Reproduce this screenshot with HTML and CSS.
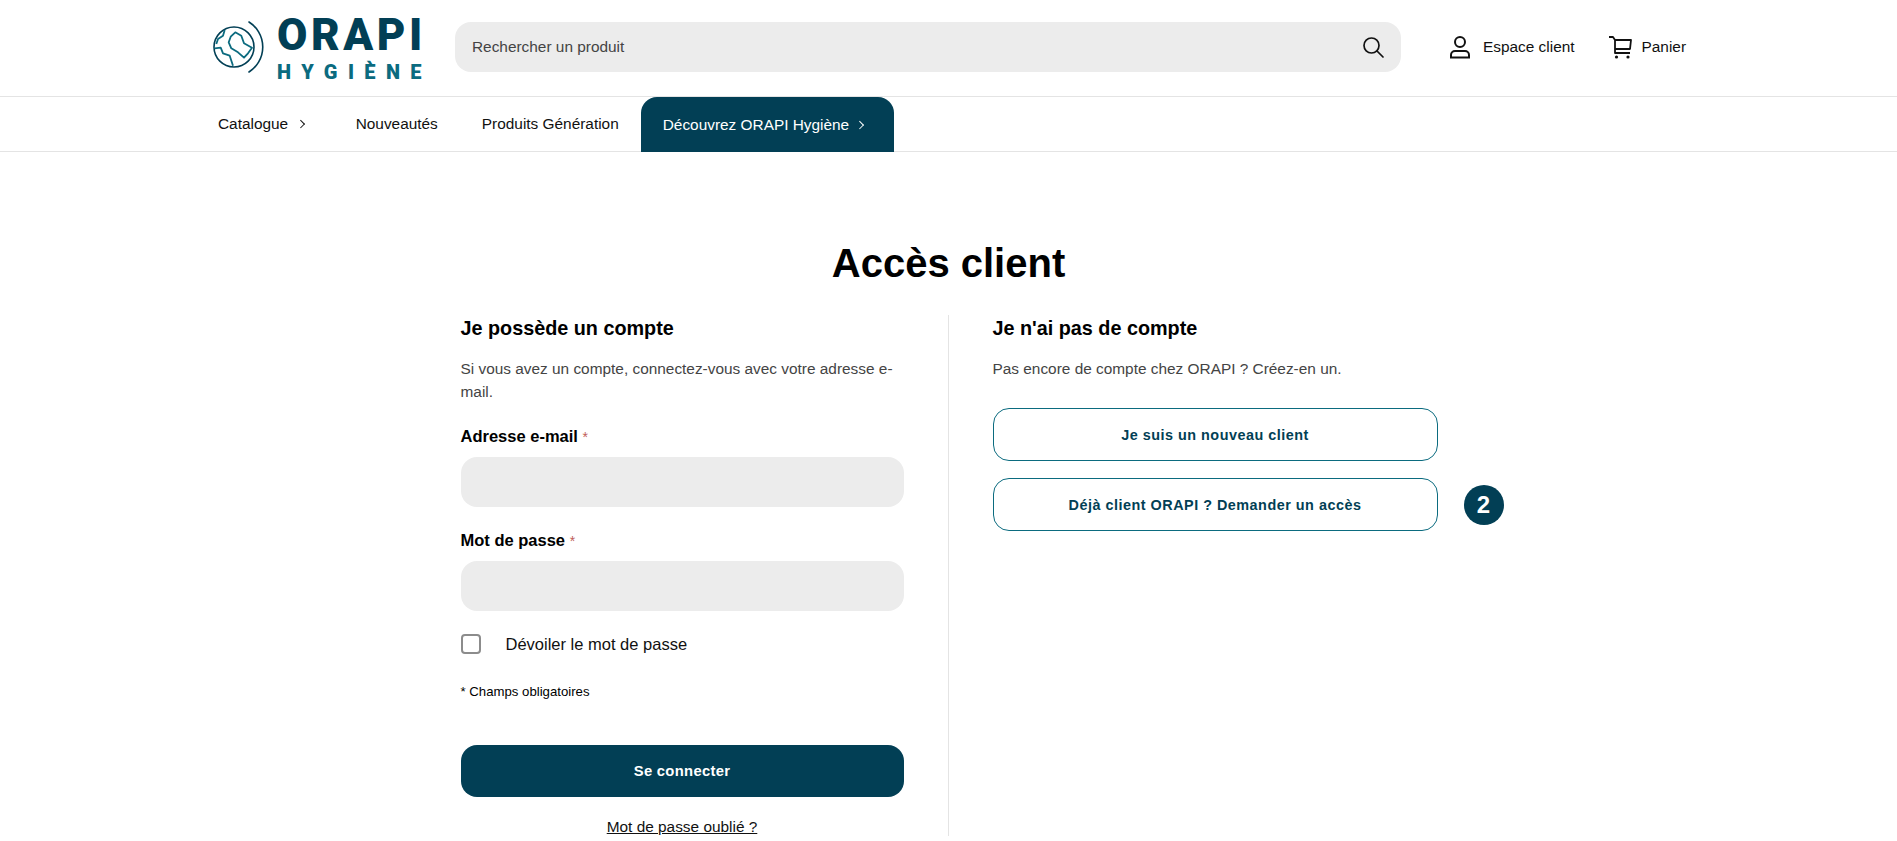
FILE: index.html
```html
<!DOCTYPE html>
<html lang="fr">
<head>
    <meta charset="UTF-8">
    <meta name="viewport" content="width=device-width, initial-scale=1.0">
    <title>Accès client - ORAPI Hygiène</title>
    <link rel="stylesheet" href="styles.css">
</head>
<body>
    <!-- Header -->
    <header class="header">
        <a class="logo" href="#">
            <svg class="logo-globe" width="58" height="58" viewBox="0 0 58 58" fill="none">
                <circle cx="23" cy="29" r="20" stroke="#023f55" stroke-width="1.6"/>
                <path d="M38 4A29.6 29.6 0 0 1 38 54" stroke="#023f55" stroke-width="1.6" stroke-linecap="round"/>
                <path d="M19.7 18.7L24.3 14.3 30.3 17.7 33 25.3 41 29.7 37 35.3 33 39.7 27 34.3 20.3 30.3 17.7 24.3z" stroke="#0b6b7f" stroke-width="1.8" stroke-linejoin="round"/>
                <path d="M3.7 30.3L9.7 29.7 12 35.3 18.7 37.7 22 47.7" stroke="#0b6b7f" stroke-width="1.8" stroke-linejoin="round"/>
                <path d="M13.7 12L12 17.7 7 21 5.3 26" stroke="#0b6b7f" stroke-width="1.8" stroke-linejoin="round"/>
            </svg>
            <span class="logo-text">
                <span class="logo-name">ORAPI</span>
                <span class="logo-sub">HYGIÈNE</span>
            </span>
        </a>
        <div class="search">
            <span class="search-text">Rechercher un produit</span>
            <svg width="24" height="24" viewBox="0 0 24 24" fill="none" stroke="#111" stroke-width="1.7" stroke-linecap="round">
                <circle cx="10.5" cy="10.5" r="7.5"/>
                <path d="M16 16l6 6"/>
            </svg>
        </div>
        <a class="header-link account" href="#">
            <svg width="22" height="24" viewBox="0 0 22 24" fill="none" stroke="#111" stroke-width="2">
                <circle cx="11" cy="7" r="5"/>
                <path d="M2 22.500v-2.500a4 4 0 0 1 4-4h10a4 4 0 0 1 4 4v2.500z"/>
            </svg>
            Espace client
        </a>
        <a class="header-link cart" href="#">
            <svg width="24" height="24" viewBox="0 0 24 24" fill="none" stroke="#111" stroke-width="1.8" stroke-linejoin="round">
                <path d="M1 2h4l2 3v13h15"/>
                <path d="M7 5h16l-1 9H7"/>
                <circle cx="8.500" cy="22" r="1.600" fill="#111" stroke="none"/>
                <circle cx="20" cy="22" r="1.600" fill="#111" stroke="none"/>
            </svg>
            Panier
        </a>
    </header>

    <!-- Navigation -->
    <nav class="nav">
        <a class="nav-item catalog" href="#">Catalogue <span class="chevron"></span></a>
        <a class="nav-item" href="#">Nouveautés</a>
        <a class="nav-item" href="#">Produits Génération</a>
        <a class="nav-item nav-active" href="#">Découvrez ORAPI Hygiène <span class="chevron"></span></a>
    </nav>

    <main class="main">
        <h1>Accès client</h1>
        <div class="columns">
            <!-- Login -->
            <section class="col col-left">
                <h2>Je possède un compte</h2>
                <p class="intro">Si vous avez un compte, connectez-vous avec votre adresse e-mail.</p>
                <label class="field-label" for="email">Adresse e-mail <span class="req">*</span></label>
                <input class="field" id="email" type="text">
                <label class="field-label" for="password">Mot de passe <span class="req">*</span></label>
                <input class="field" id="password" type="password">
                <label class="show-pass"><span class="checkbox"></span>Dévoiler le mot de passe</label>
                <p class="required-note">* Champs obligatoires</p>
                <button class="btn-primary">Se connecter</button>
                <a class="forgot" href="#">Mot de passe oublié ?</a>
            </section>

            <!-- New account -->
            <section class="col col-right">
                <h2>Je n'ai pas de compte</h2>
                <p class="intro">Pas encore de compte chez ORAPI ? Créez-en un.</p>
                <a class="btn-outline" href="#">Je suis un nouveau client</a>
                <div class="access-row">
                    <a class="btn-outline" href="#">Déjà client ORAPI ? Demander un accès</a>
                    <span class="badge">2</span>
                </div>
            </section>
        </div>
    </main>
</body>
</html>
```

FILE: styles.css
```css
* {
    box-sizing: border-box;
}
body {
    font-family: "Liberation Sans", Arial, sans-serif;
    margin: 0;
    background-color: #fff;
    color: #000;
}
a {
    color: inherit;
    text-decoration: none;
}
.header {
    height: 97px;
    display: flex;
    align-items: center;
    padding: 0 0 2px 211px;
    border-bottom: 1px solid #e4e4e4;
}
.logo {
    display: flex;
    align-items: center;
    width: 244px;
    flex-shrink: 0;
}
.logo-globe {
    margin-right: 8px;
    flex-shrink: 0;
}
.logo-text {
    display: flex;
    flex-direction: column;
    padding-top: 2.4px;
    font-family: Roboto, sans-serif;
    font-weight: 900;
}
.logo-name {
    font-size: 44px;
    line-height: 42px;
    letter-spacing: 3.6px;
    color: #023f55;
}
.logo-sub {
    margin-top: 5.4px;
    font-size: 20px;
    line-height: 22px;
    letter-spacing: 10.4px;
    color: #0b6b7f;
}
.search {
    width: 946px;
    height: 50px;
    display: flex;
    align-items: center;
    justify-content: space-between;
    padding: 0 16px 0 17px;
    background-color: #ececec;
    border-radius: 16px;
    font-size: 15.4px;
    color: #444;
}
.header-link {
    display: flex;
    align-items: center;
    gap: 12px;
    font-size: 15.4px;
    color: #111;
}
.account {
    margin-left: 48px;
}
.cart {
    margin-left: 33px;
    gap: 10px;
}
.nav {
    height: 55px;
    display: flex;
    padding-left: 218px;
    border-bottom: 1px solid #e4e4e4;
}
.nav-item {
    display: flex;
    align-items: center;
    gap: 10px;
    font-size: 15.4px;
    color: #111;
    margin-right: 44px;
}
.catalog {
    margin-right: 52px;
}
.nav-active {
    margin-left: -22px;
    margin-right: 0;
    padding: 0 31px 0 22px;
    height: 55px;
    gap: 8px;
    background-color: #023f55;
    color: #fff;
    border-radius: 16px 16px 0 0;
}
.chevron {
    width: 5.5px;
    height: 5.5px;
    border-top: 1.5px solid currentColor;
    border-right: 1.5px solid currentColor;
    transform: rotate(45deg);
}
.main {
    padding-top: 86px;
}
h1 {
    margin: 0 0 27px;
    font-size: 40px;
    line-height: 50px;
    text-align: center;
}
.columns {
    width: 976px;
    margin: 0 auto;
    display: grid;
    grid-template-columns: 488px 488px;
}
.col-left {
    padding-right: 44px;
    border-right: 1px solid #e4e4e4;
    height: 521px;
}
.col-right {
    padding-left: 44px;
}
h2 {
    margin: 0 0 17px;
    font-size: 19.800px;
    line-height: 26px;
}
.intro {
    margin: 0;
    font-size: 15.4px;
    line-height: 22.500px;
    color: #444;
}
.field-label {
    display: block;
    font-size: 16.500px;
    font-weight: 700;
    line-height: 22px;
    margin: 22px 0 9px;
}
.req {
    font-weight: 400;
    font-size: 14px;
    color: #c0605a;
}
.field {
    display: block;
    width: 100%;
    height: 50px;
    border: none;
    border-radius: 16px;
    background-color: #ececec;
    margin-bottom: 12px;
}
.show-pass {
    display: flex;
    align-items: center;
    gap: 25px;
    font-size: 16.500px;
    color: #111;
    margin-top: 23px;
}
.checkbox {
    width: 20px;
    height: 20px;
    border: 2px solid #8c8c8c;
    border-radius: 4px;
}
.required-note {
    margin: 29px 0 44px;
    font-size: 13.200px;
    line-height: 18px;
}
.btn-primary {
    display: block;
    width: 100%;
    height: 52px;
    border: none;
    border-radius: 16px;
    background-color: #023f55;
    color: #fff;
    font-family: inherit;
    font-size: 14.800px;
    font-weight: 700;
    letter-spacing: 0.3px;
}
.forgot {
    display: block;
    margin-top: 21px;
    text-align: center;
    font-size: 15.4px;
    color: #111;
    text-decoration: underline;
}
.btn-outline {
    display: flex;
    align-items: center;
    justify-content: center;
    flex-shrink: 0;
    width: 445px;
    height: 53px;
    border: 1px solid #0b6b7f;
    border-radius: 16px;
    font-size: 14.400px;
    font-weight: 700;
    letter-spacing: 0.5px;
    color: #023f55;
    margin-top: 27.500px;
}
.access-row {
    display: flex;
    align-items: center;
    gap: 26px;
}
.access-row .btn-outline {
    margin-top: 17px;
}
.badge {
    width: 40px;
    height: 40px;
    flex-shrink: 0;
    margin-top: 17px;
    display: flex;
    align-items: center;
    justify-content: center;
    border-radius: 50%;
    background-color: #023f55;
    color: #fff;
    font-size: 24px;
    font-weight: 700;
}
```
